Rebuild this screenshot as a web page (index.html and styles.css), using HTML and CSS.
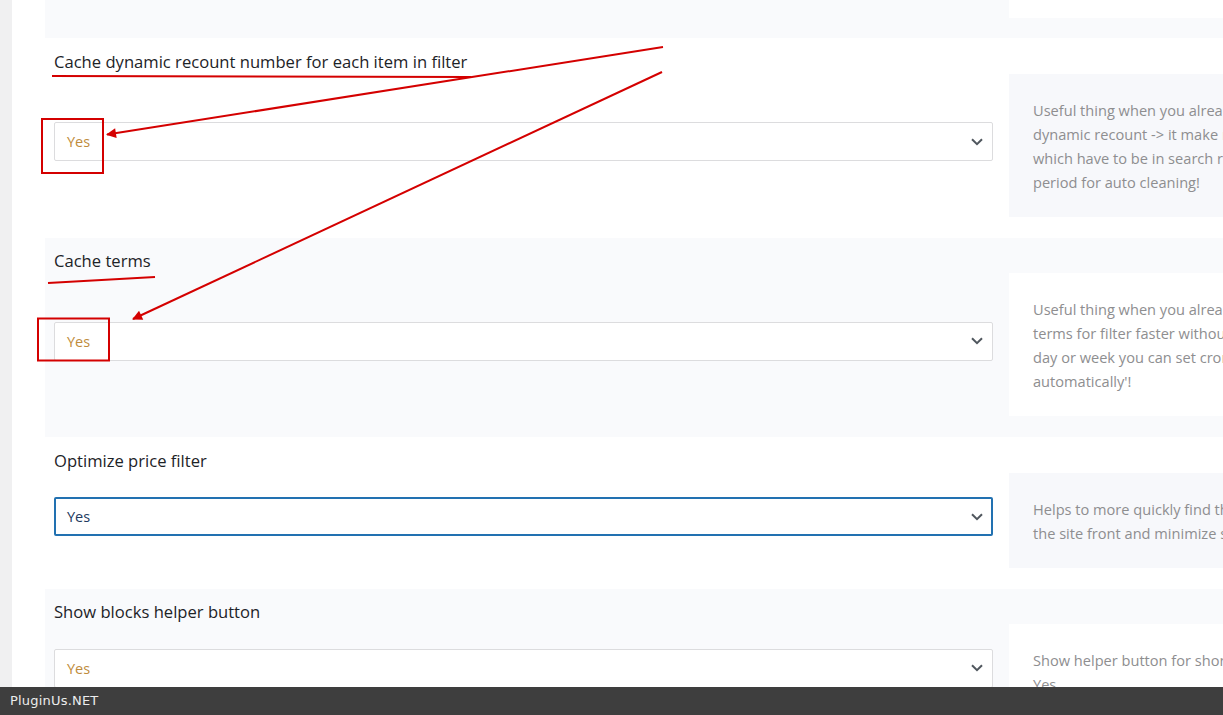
FILE: index.html
```html
<!DOCTYPE html>
<html>
<head>
<meta charset="utf-8">
<link rel="stylesheet" href="styles.css">
</head>
<body>
<div class="page">
  <div class="strip"></div>
  <main class="settings">
    <div class="row row-alt row-stub">
      <div class="stub-left"></div>
      <div class="stub-box"></div>
    </div>

    <div class="row">
      <div class="label">Cache dynamic recount number for each item in filter</div>
      <div class="content">
        <div class="control">
          <div class="select"><span class="value">Yes</span><svg class="chev" viewBox="0 0 12 8" width="12" height="8"><path d="M1 1.2 L6 6.2 L11 1.2"/></svg></div>
        </div>
        <div class="desc desc-alt">Useful thing when you already set your site IN PRODUCTION mode and use<br>dynamic recount -&gt; it make recount very fast! Of course if you added new products<br>which have to be in search results you have to clean this cache OR you can set time<br>period for auto cleaning!</div>
      </div>
    </div>

    <div class="row row-alt">
      <div class="label">Cache terms</div>
      <div class="content">
        <div class="control">
          <div class="select"><span class="value">Yes</span><svg class="chev" viewBox="0 0 12 8" width="12" height="8"><path d="M1 1.2 L6 6.2 L11 1.2"/></svg></div>
        </div>
        <div class="desc">Useful thing when you already set your site IN PRODUCTION mode - use it for getting of<br>terms for filter faster without big MySQL queries! If you actively adds new terms every<br>day or week you can set cron period for cleaning. Another way set: 'Not clean cached terms<br>automatically'!</div>
      </div>
    </div>

    <div class="row">
      <div class="label">Optimize price filter</div>
      <div class="content">
        <div class="control">
          <div class="select select-focus"><span class="value">Yes</span><svg class="chev" viewBox="0 0 12 8" width="12" height="8"><path d="M1 1.2 L6 6.2 L11 1.2"/></svg></div>
        </div>
        <div class="desc desc-alt">Helps to more quickly find the price range of products on<br>the site front and minimize server load</div>
      </div>
    </div>

    <div class="row row-alt">
      <div class="label">Show blocks helper button</div>
      <div class="content">
        <div class="control">
          <div class="select"><span class="value">Yes</span><svg class="chev" viewBox="0 0 12 8" width="12" height="8"><path d="M1 1.2 L6 6.2 L11 1.2"/></svg></div>
        </div>
        <div class="desc">Show helper button for shortcode [woof] on the front when "Set filter automatically" is<br>Yes</div>
      </div>
    </div>
  </main>
</div>

<svg class="annotations" width="1223" height="715" viewBox="0 0 1223 715">
  <defs>
    <marker id="ah" viewBox="0 0 10 10" refX="9" refY="5" markerWidth="6" markerHeight="5" orient="auto" markerUnits="strokeWidth">
      <path d="M0 0 L10 5 L0 10 z" fill="#d40000"/>
    </marker>
  </defs>
  <g stroke="#d40000" stroke-width="2" fill="none">
    <line x1="52" y1="76" x2="471" y2="77"/>
    <line x1="663" y1="47" x2="107" y2="134.5" marker-end="url(#ah)"/>
    <line x1="662" y1="72" x2="133" y2="319" marker-end="url(#ah)"/>
    <line x1="48" y1="283" x2="155" y2="277"/>
    <rect x="42" y="119" width="61" height="54"/>
    <rect x="38" y="318.5" width="71" height="42"/>
  </g>
</svg>

<div class="footer-bar">PluginUs.NET</div>
</body>
</html>
```

FILE: styles.css
```css
html, body {
  margin: 0;
  padding: 0;
  width: 1223px;
  height: 715px;
  overflow: hidden;
  background: #ffffff;
}

body {
  font-family: "Open Sans", "Noto Sans", sans-serif;
  position: relative;
}

.page {
  display: flex;
  width: 1400px;
}

.strip {
  flex: 0 0 12px;
  width: 12px;
  min-height: 715px;
  background: #f0f0f1;
}

.settings {
  margin-left: 33px;
  flex: 1;
  display: flex;
  flex-direction: column;
}

.row {
  padding: 11.5px 0 21px 9px;
  background: #ffffff;
}

.row-alt {
  background: #f9fafc;
}

.row-stub {
  display: flex;
  gap: 16px;
  padding: 0 0 20px 9px;
}

.stub-left {
  width: 939px;
}

.stub-box {
  width: 320px;
  height: 18px;
  background: #ffffff;
}

.label {
  font-size: 16.6px;
  line-height: 24px;
  color: #1d2327;
}

.content {
  display: flex;
  align-items: center;
  gap: 16px;
}

.control {
  flex: 0 0 939px;
  padding-bottom: 7px;
}

.select {
  box-sizing: border-box;
  height: 39px;
  border: 1px solid #dcdcde;
  border-radius: 2px;
  background: #ffffff;
  display: flex;
  align-items: center;
  justify-content: space-between;
  padding: 0 9px 0 12px;
}

.select .value {
  font-size: 14.5px;
  color: #c08c3c;
}

.select-focus {
  border: 2px solid #2271b1;
  padding-left: 11px;
  padding-right: 8px;
}

.select-focus .value {
  color: #223a5e;
}

.chev {
  display: block;
}

.chev path {
  fill: none;
  stroke: #50575e;
  stroke-width: 2;
}

.desc {
  flex: 0 0 auto;
  width: 600px;
  box-sizing: border-box;
  padding: 24px 24px 23px;
  font-size: 14.6px;
  line-height: 24px;
  color: #8e8e90;
  white-space: nowrap;
  overflow: hidden;
  background: #ffffff;
}

.desc-alt {
  background: #f7f8fb;
}

.annotations {
  position: absolute;
  left: 0;
  top: 0;
  pointer-events: none;
}

.footer-bar {
  position: fixed;
  left: 0;
  right: 0;
  bottom: 0;
  height: 28px;
  background: #3e3e3e;
  color: #ececec;
  font-family: "DejaVu Sans", sans-serif;
  font-size: 13px;
  line-height: 28px;
  padding-left: 10px;
  letter-spacing: 0.2px;
}
```
